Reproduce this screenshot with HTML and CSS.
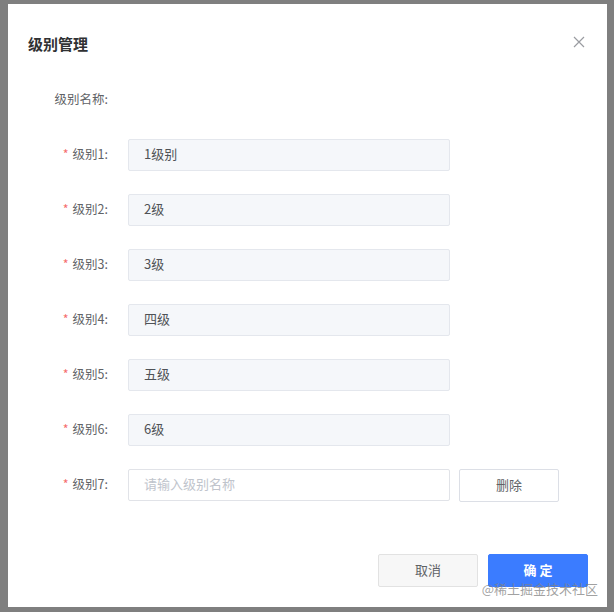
FILE: index.html
```html
<!DOCTYPE html>
<html lang="zh-CN">
<head>
<meta charset="utf-8">
<title>级别管理</title>
<link rel="stylesheet" href="styles.css">
</head>
<body>
<div class="overlay">
  <div class="dialog">
    <div class="dialog-header">
      <span class="dialog-title">级别管理</span>
      <button class="close-btn" aria-label="关闭">
        <svg width="12" height="12" viewBox="0 0 12 12"><path d="M1 1 L11 11 M11 1 L1 11" stroke="#9a9ca1" stroke-width="1.2" fill="none"/></svg>
      </button>
    </div>
    <div class="dialog-body">
      <div class="form-item">
        <label class="form-label">级别名称:</label>
      </div>
      <div class="form-item">
        <label class="form-label"><span class="req">*</span>级别1:</label>
        <div class="input disabled">1级别</div>
      </div>
      <div class="form-item">
        <label class="form-label"><span class="req">*</span>级别2:</label>
        <div class="input disabled">2级</div>
      </div>
      <div class="form-item">
        <label class="form-label"><span class="req">*</span>级别3:</label>
        <div class="input disabled">3级</div>
      </div>
      <div class="form-item">
        <label class="form-label"><span class="req">*</span>级别4:</label>
        <div class="input disabled">四级</div>
      </div>
      <div class="form-item">
        <label class="form-label"><span class="req">*</span>级别5:</label>
        <div class="input disabled">五级</div>
      </div>
      <div class="form-item">
        <label class="form-label"><span class="req">*</span>级别6:</label>
        <div class="input disabled">6级</div>
      </div>
      <div class="form-item">
        <label class="form-label"><span class="req">*</span>级别7:</label>
        <div class="input placeholder">请输入级别名称</div>
        <button class="btn btn-delete">删除</button>
      </div>
    </div>
    <div class="dialog-footer">
      <button class="btn btn-cancel">取消</button>
      <button class="btn btn-primary">确 定</button>
    </div>
  </div>
</div>
<div class="watermark">@稀土掘金技术社区</div>
</body>
</html>
```

FILE: styles.css
```css
* { box-sizing: border-box; }

html, body {
  margin: 0;
  padding: 0;
}

body {
  width: 614px;
  height: 612px;
  background: #7f7f7f;
  font-family: "Noto Sans CJK SC", "Noto Sans", sans-serif;
  color: #606266;
  overflow: hidden;
  position: relative;
}

.overlay {
  padding: 4px 7px 5px 8px;
}

.dialog {
  width: 599px;
  height: 603px;
  background: #ffffff;
  display: flex;
  flex-direction: column;
}

.dialog-header {
  display: flex;
  align-items: center;
  justify-content: space-between;
  padding: 27px 22px 0 20px;
  height: 52px;
}

.dialog-title {
  font-size: 15px;
  line-height: 24px;
  font-weight: 600;
  color: #303133;
}

.close-btn {
  border: 0;
  background: transparent;
  padding: 0;
  width: 12px;
  height: 12px;
  display: flex;
  margin-top: -3px;
}

.dialog-body {
  padding-top: 28px;
  display: flex;
  flex-direction: column;
  gap: 23px;
}

.form-item {
  display: flex;
  align-items: center;
  height: 32px;
}

.form-label {
  width: 100px;
  text-align: right;
  font-size: 12.5px;
  line-height: 18px;
  padding-bottom: 3px;
  color: #606266;
  margin-right: 20px;
  white-space: nowrap;
}

.req {
  color: #f56c6c;
  margin-right: 4px;
}

.input {
  width: 322px;
  height: 32px;
  line-height: 27px;
  border: 1px solid #e4e7ed;
  border-radius: 2px;
  padding: 0 15px;
  font-size: 13px;
}

.input.disabled {
  background: #f5f7fa;
  color: #4f5256;
}

.input.placeholder {
  background: #ffffff;
  border-color: #e1e3e8;
  color: #c0c4cc;
}

.btn {
  font-family: inherit;
  font-size: 13px;
  line-height: 1;
  width: 100px;
  height: 33px;
  padding: 0 0 2px;
  border-radius: 2px;
  cursor: pointer;
}

.btn-delete {
  margin-left: 9px;
  background: #ffffff;
  border: 1px solid #dcdfe6;
  color: #606266;
}

.dialog-footer {
  display: flex;
  justify-content: flex-end;
  gap: 10px;
  padding: 0 19px 20px 0;
  margin-top: auto;
}

.btn-cancel {
  background: #f7f7f7;
  border: 1px solid #e2e2e2;
  color: #606266;
}

.btn-primary {
  background: #3b7cff;
  border: 1px solid #3b7cff;
  color: #ffffff;
  font-weight: 600;
}

.watermark {
  position: absolute;
  right: 16px;
  top: 581px;
  font-size: 13px;
  line-height: 15px;
  color: rgba(130, 130, 130, 0.75);
  white-space: nowrap;
}
```
